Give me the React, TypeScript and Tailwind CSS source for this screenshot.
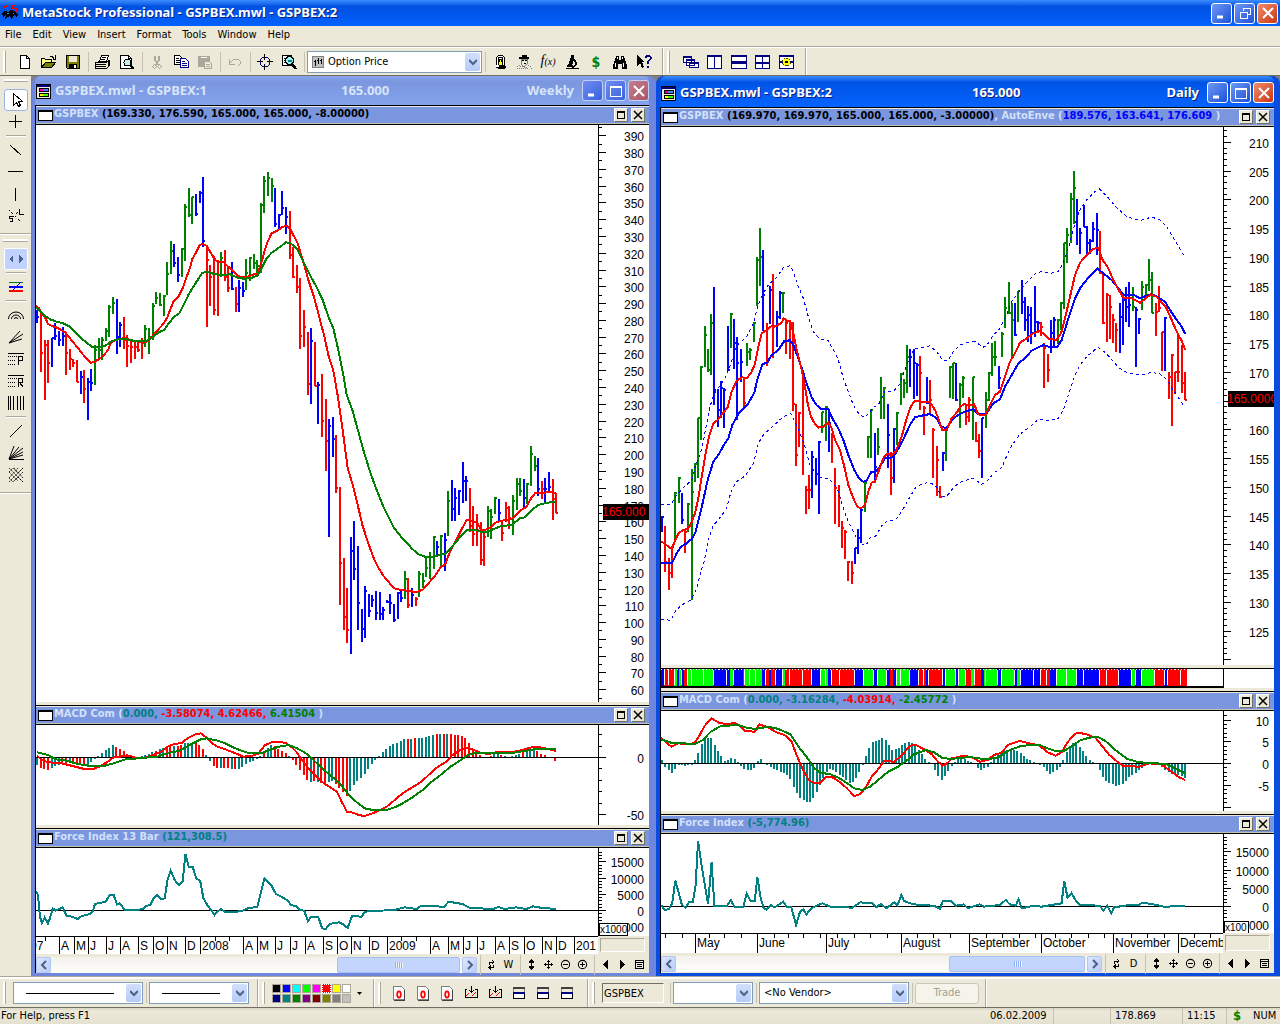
import React from 'react';

/* ---------- shared types and colours ---------- */

type Tone = 'r' | 'g' | 'b';
type Bar = [Tone, number, number, number, number];

const INK: Record<string, string> = {
  r: '#ff0000',
  g: '#008000',
  b: '#0000ff',
  t: '#008080',
  l: '#00ff00',
};

const UI = "font-['DejaVu_Sans_Condensed','Noto_Sans',sans-serif]";
const TITLE = "font-['Noto_Sans','Open_Sans',sans-serif]";
const ARIAL = 'Liberation Sans, Arial, sans-serif';

/* Series are kept in thirds of a pixel: bar = tone, x, high, low, close. */

const weeklyA: Bar[] = [
  ['b',21,450,488,470],['r',33,455,635,578],['r',45,541,719,555],['r',54,541,670,608],['b',66,535,620,535],['b',75,490,540,527],
  ['b',87,512,557,540],['b',99,502,557,527],['r',108,515,644,578],['r',120,568,629,598],['r',129,598,620,608],['r',141,600,665,665],
  ['b',153,633,701,650],['r',162,630,728,686],['b',174,655,779,665],['b',183,627,692,668],['g',195,556,676,570],['g',207,535,598,570],
  ['g',216,532,600,540],['g',228,505,542,513],['g',237,436,530,440],['g',249,412,461,430],['b',261,418,581,530],['b',270,487,560,495],
  ['r',282,472,566,540],['r',291,525,620,558],['r',303,540,608,560],['r',315,545,597,560],['r',324,543,575,570],['r',336,535,596,545],
  ['g',345,495,560,507],['g',357,505,581,530],['g',369,430,540,438],['g',378,397,433,415],['g',390,400,437,435],['g',402,406,467,408],
  ['g',411,307,405,342],['g',423,243,342,272],['b',432,253,322,310],['b',444,292,365,345],['g',456,265,352,268],['g',465,133,302,140],
  ['g',477,85,172,165],['g',487,110,193,112],['b',498,102,167,162],['b',510,94,130,98],['b',519,52,262,243],['r',531,258,502,300],
  ['r',540,316,437,352],['r',552,288,465,450],['r',564,300,467,305],['g',573,275,352,293],['r',585,270,362,350],['r',595,322,395,385],
  ['b',606,307,390,388],['r',618,380,455,432],['b',627,360,455,383],['b',639,365,410,393],['g',648,298,390,340],['g',660,290,362,293],
  ['g',672,282,328,310],['g',681,300,342,318],['g',693,130,340,135],['g',702,48,160,62],['g',714,37,107,55],['g',726,55,127,78],
  ['b',735,85,202,193],['b',747,163,208,165],['b',756,94,165,143],['b',768,140,223,170],['r',780,154,298,285],['r',789,260,355,352],
  ['r',801,315,398,380],['r',810,355,566,527],['r',822,450,560,500],['r',834,517,705,672],['b',843,505,731,543],['r',855,547,678,678],
  ['b',864,667,791,675],['r',876,642,830,782],
];

const weeklyB: Bar[] = [
  ['r',18,297,513,422],['b',27,357,711,377],['b',39,352,470,417],['r',48,406,578,563],['r',60,562,914,788],['r',72,774,990,950],
  ['r',81,864,1028,990],['b',93,711,1061,752],['b',102,663,839,806],['b',114,738,990,909],['b',126,927,1025,987],['b',135,858,1014,873],
  ['b',147,882,950,933],['b',156,885,920,900],['b',168,873,959,938],['b',180,876,959,942],['b',189,922,960,930],['b',201,900,910,907],
  ['b',210,882,943,908],['b',222,913,965,960],['b',234,877,956,880],['b',243,873,905,895],['g',255,813,896,837],['r',264,834,923,915],
  ['b',276,864,921,885],['r',288,890,917,897],['g',297,814,892,822],['g',309,819,865,843],['g',318,770,830,803],['g',330,756,837,770],
  ['g',342,708,806,712],['b',351,722,768,740],['g',363,705,801,707],['b',375,699,812,720],['g',384,573,708,603],['b',396,540,663,627],
  ['b',405,564,663,595],['b',417,570,645,572],['b',429,486,608,543],['b',438,528,603,543],['r',450,564,697,677],['r',459,618,738,702],
  ['r',471,641,738,690],['r',483,665,795,780],['r',492,690,797,710],['g',504,618,711,633],['g',513,626,718,652],['g',525,592,641,593],
  ['b',537,597,665,640],['r',546,665,722,700],['r',558,606,665,623],['r',567,618,686,655],['g',579,586,704,602],['g',591,534,630,552],
  ['g',600,534,587,573],['b',612,537,625,595],['g',621,550,612,553],['g',633,438,559,463],['g',645,467,512,497],['b',654,474,587,567],
  ['r',666,543,597,567],['b',675,534,608,567],['b',687,516,580,560],['r',699,537,660,597],['r',708,580,638,638],
];

const dailyA: Bar[] = [
  ['b',21,1037,1085,1040],['r',30,1068,1205,1175],['r',42,1163,1259,1208],['r',51,1128,1223,1130],['g',60,965,1110,968],['g',72,922,1000,925],
  ['b',81,968,1063,1050],['r',90,1078,1150,1085],['g',99,1000,1085,1003],['g',111,897,1291,965],['g',120,880,935,883],['g',129,743,923,745],
  ['g',138,587,810,590],['g',150,468,592,495],['g',159,538,605,600],['g',168,433,615,460],['b',177,352,706,660],['b',189,657,770,720],
  ['b',198,632,745,655],['b',207,655,775,660],['b',219,468,603,600],['g',228,430,535,433],['b',237,448,598,520],['b',246,502,749,580],
  ['b',258,538,637,575],['r',267,620,710,700],['g',276,520,587,545],['g',285,533,570,540],['g',297,457,517,460],['g',306,262,408,270],
  ['g',315,175,347,260],['b',324,241,484,375],['r',336,460,587,575],['b',345,348,463,360],['r',354,312,563,470],['b',366,423,530,440],
  ['b',375,363,448,370],['g',384,367,430,368],['r',393,448,551,460],['r',405,455,568,462],['r',414,455,724,703],['r',423,703,887,855],
  ['r',432,727,830,730],['r',444,600,914,640],['r',453,947,1033,960],['r',462,915,1018,960],['b',471,843,983,860],['b',483,865,945,912],
  ['b',492,812,1033,815],['g',501,725,790,725],['g',513,707,813,710],['b',522,718,845,760],['r',531,790,880,800],['r',540,895,1063,955],
  ['r',552,945,1070,983],['r',561,1052,1133,1075],['r',570,1080,1168,1085],['r',579,1172,1232,1175],['r',591,1172,1241,1208],['b',600,1133,1183,1135],
  ['b',609,1078,1153,1105],['b',618,1018,1120,1020],['g',630,935,1025,938],['g',639,797,865,800],['g',648,718,863,720],['b',660,790,935,890],
  ['g',669,775,855,830],['g',678,622,748,680],['g',687,652,748,655],['b',699,703,893,795],['r',708,845,974,925],['b',717,775,940,778],
  ['g',726,727,825,730],['g',738,610,706,613],['g',747,627,685,640],['g',756,525,668,560],['b',765,538,650,560],['b',777,537,688,580],
  ['b',786,580,677,585],['r',795,557,720,610],['r',807,708,795,715],['b',816,622,703,700],['r',825,630,730,690],['r',834,775,923,780],
  ['r',846,828,977,870],['r',855,948,983,980],['b',864,847,902,850],['g',873,770,872,775],['g',885,587,683,590],['g',894,578,687,580],
  ['b',903,580,694,690],['g',915,640,775,645],['g',924,618,683,625],['r',933,705,765,740],['r',942,682,757,690],['g',954,620,810,622],
];

const dailyB: Bar[] = [
  ['r',48,907,965,963],['r',57,943,1013,993],['b',66,893,1073,895],['g',78,817,925,840],['g',87,757,843,760],['g',96,670,767,710],
  ['g',105,662,737,710],['b',117,738,808,775],['g',126,635,710,642],['g',135,532,625,565],['g',147,487,583,580],['g',156,548,718,600],
  ['b',165,548,647,645],['g',174,512,605,513],['b',186,481,582,545],['b',195,530,633,600],['b',204,558,667,585],['b',213,560,673,640],
  ['b',225,498,650,605],['b',234,603,637,610],['r',243,607,648,620],['r',252,670,805,685],['r',264,703,785,750],['b',273,600,700,640],
  ['b',282,592,683,600],['g',294,598,673,600],['g',303,547,630,550],['g',312,368,567,370],['g',321,325,428,345],['g',333,220,370,237],
  ['g',342,153,312,203],['b',351,238,375,280],['b',360,325,402,340],['b',372,255,320,320],['b',381,318,408,370],['b',390,358,403,362],
  ['b',399,307,367,328],['b',411,280,406,330],['r',420,332,463,460],['r',429,460,613,610],['r',441,520,667,525],['r',450,525,658,560],
  ['r',459,582,668,600],['r',468,610,697,630],['b',480,548,700,590],['b',489,533,675,540],['b',498,500,607,560],['b',507,485,620,555],
  ['g',519,500,573,560],['b',528,560,740,570],['b',537,595,643,597],['g',546,482,570,500],['g',558,493,530,495],['g',567,418,512,480],
  ['g',576,457,580,580],['r',588,550,648,575],['r',597,497,577,565],['r',606,635,752,637],['b',615,590,753,593],['r',627,757,837,770],
  ['r',636,703,917,705],['r',645,755,822,757],['r',654,643,785,755],['r',666,675,818,790],['r',675,755,840,840],
];

/* ---------- drawing helpers ---------- */

function Line({ pts, color, dash, thin }: { pts: string; color: string; dash?: boolean; thin?: boolean }) {
  return (
    <polyline
      points={pts}
      fill="none"
      stroke={color}
      strokeWidth={thin ? 1 : 2}
      strokeDasharray={dash ? '3 3' : undefined}
      vectorEffect="non-scaling-stroke"
      shapeRendering="crispEdges"
    />
  );
}

function Bars({ data }: { data: Bar[] }) {
  return (
    <>
      {data.map(([c, x, hi, lo, close]) => (
        <path key={x} d={`M${x} ${hi}V${lo}M${x} ${close}h6`} stroke={INK[c]} strokeWidth={6} fill="none" shapeRendering="crispEdges" />
      ))}
    </>
  );
}

function parse(knots: string): number[][] {
  return knots.split(' ').map((p) => p.split(',').map(Number));
}

function Histogram({ knots, zero, step, runs }: { knots: string; zero: number; step: number; runs: string }) {
  const pts = parse(knots);
  const last = pts[pts.length - 1][0];
  const colours = runs.split(' ').map((r) => r.split(':'));
  const items: React.ReactNode[] = [];
  for (let x = pts[0][0]; x <= last; x += step) {
    let i = 0;
    while (i < pts.length - 2 && pts[i + 1][0] < x) i++;
    const [x0, y0] = pts[i];
    const [x1, y1] = pts[i + 1];
    const y = y0 + ((y1 - y0) * (x - x0)) / (x1 - x0);
    const run = colours.find((r) => x <= Number(r[1])) ?? colours[colours.length - 1];
    items.push(
      <path
        key={x}
        d={`M${x} ${zero}V${y}`}
        stroke={INK[run[0]]}
        strokeWidth={2}
        vectorEffect="non-scaling-stroke"
        shapeRendering="crispEdges"
      />,
    );
  }
  return <>{items}</>;
}

function Plot({ h, size, children }: { h: number; size: string; children: React.ReactNode }) {
  return (
    <svg className={`block min-w-0 flex-1 ${size}`} viewBox={`0 0 1686 ${h * 3}`} preserveAspectRatio="none">
      {children}
    </svg>
  );
}

type ScaleProps = {
  size: string;
  zeroY: number;
  unit: number;
  from: number;
  to: number;
  major: number;
  minor: number;
  labels: [number, string][];
  price?: [number, string];
  box?: [string, number, number];
};

function ValueScale({ size, zeroY, unit, from, to, major, minor, labels, price, box }: ScaleProps) {
  const ticks: React.ReactNode[] = [];
  for (let v = from; v <= to; v += minor) {
    const y = Math.round(zeroY - v * unit);
    ticks.push(<path key={v} d={`M0 ${y + 0.5}h${v % major === 0 ? 8 : 4}`} stroke="#000" />);
  }
  return (
    <svg className={`block w-[51px] shrink-0 ${size}`} fontFamily={ARIAL} fontSize="12" shapeRendering="crispEdges">
      <path d="M.5 0V600" stroke="#000" />
      {ticks}
      {labels.map(([v, s]) => (
        <text key={v} x="46" y={Math.round(zeroY - v * unit) + 6} textAnchor="end">
          {s}
        </text>
      ))}
      {price && (
        <>
          <rect x="5" y={price[0] - 8} width="46" height="16" />
          <text x="4" y={price[0] + 4} fill="#ff0000">
            {price[1]}
          </text>
        </>
      )}
      {box && (
        <>
          <rect x="1.5" y={box[1] + 0.5} width={box[2]} height="12" fill="#fff" stroke="#000" />
          <text x="2" y={box[1] + 10} fontSize="10">
            {box[0]}
          </text>
        </>
      )}
    </svg>
  );
}

/* ---------- icons ---------- */

function Ico({ children, size = 'size-4' }: { children: React.ReactNode; size?: string }) {
  return (
    <svg className={size} viewBox="0 0 16 16" fill="none" stroke="#000" shapeRendering="crispEdges" aria-hidden="true">
      {children}
    </svg>
  );
}

const icons: Record<string, React.ReactNode> = {
  New: <Ico><path d="M3.5 1.5h6l3 3v10h-9zM9.5 1.5v3h3" fill="#fff" /></Ico>,
  Open: <Ico><path d="M.5 13.500v-9h3l1 1h6v3" fill="#ffff80" /><path d="M.5 13.500l4-5h10l-4 5z" fill="#808000" /><path d="M9 2.500h2l2 2M14.500 1v4h-3" /></Ico>,
  Save: <Ico><path d="M1.5 1.5h13v13h-12l-1-1z" fill="#808000" /><path d="M4 2h8v6H4z" fill="#ece9d8" stroke="none" /><path d="M4 10h8v4H4z" fill="#000" stroke="none" /><path d="M9 11h2v3H9z" fill="#fff" stroke="none" /></Ico>,
  Print: <Ico><path d="M4.5 7.5l2-6h7l-2 6z" fill="#fff" /><path d="M7 3.5h4M6 5.5h4" /><path d="M.5 8.500h11l3-2v5l-3 3h-11z" fill="#ece9d8" /><path d="M1 10.500h10M1 12.500h10M3 8.500l2-2M13.500 6v6" /><path d="M7 11.500h2" stroke="#ffff00" /></Ico>,
  'Print Preview': <Ico><path d="M1.5 1.5h8l3 3v10h-11z" fill="#fff" /><path d="M9.500 1.5v3h3" /><circle cx="8.500" cy="8.500" r="3.500" fill="#c0f0f0" /><path d="M11 11l4 4" strokeWidth="2" /></Ico>,
  Cut: <Ico><path d="M6 2v4l3 5M10 2v4l-3 5" stroke="#aca899" strokeWidth="1.5" /><circle cx="5.5" cy="12.500" r="1.800" stroke="#aca899" /><circle cx="10.500" cy="12.500" r="1.800" stroke="#aca899" /></Ico>,
  Copy: <Ico><path d="M1.5 1.5h5l2 2v7h-7z" fill="#fff" /><path d="M3 4.500h3M3 6.500h4M3 8.500h4" /><path d="M7.500 4.500h5l3 3v6h-8z" fill="#fff" stroke="#000080" /><path d="M9 7.500h3M9 9.500h5M9 11.500h5" stroke="#000080" /></Ico>,
  Paste: <Ico><path d="M1.5 2.500h11v10h-11z" fill="#aca899" stroke="#aca899" /><path d="M4 3.500h6" stroke="#fff" /><path d="M7.500 7.500h5l2 2v5h-7z" fill="#ece9d8" stroke="#aca899" /><path d="M9 10.500h4M9 12.500h4" stroke="#aca899" /></Ico>,
  Undo: <Ico><path d="M2.500 5v5h5M3 9l4-4h4l2 2v3l-2 2" stroke="#aca899" /></Ico>,
  'Data window': <Ico><circle cx="8" cy="8" r="5" stroke="#000080" /><path d="M7.500 0v6M7.500 10v6M0 7.500h6M10 7.500h6" stroke="#000" /></Ico>,
  Zoom: <Ico><path d="M1.5 1.5h9v10h-9z" fill="#fff" /><path d="M3 4.500h5M3 6.500h5M3 8.500h4" /><circle cx="8.500" cy="6.500" r="4" fill="#a0f0f0" strokeWidth="1.5" /><path d="M6.500 6.500h4" stroke="#008080" strokeWidth="2" /><path d="M11 10l4 5" strokeWidth="2.500" /></Ico>,
  'The Explorer': <Ico><path d="M4.500 14V3.500l2-2h4l2 2V11" fill="#fff" /><path d="M6 3h4v3H6z" fill="#fff" stroke="#000" /><path d="M7 5h2v2h1v4H6V7h1z" fill="#ffff00" stroke="#000" /><path d="M3 12l4-1h5l3 2-3 2H6z" fill="#000" stroke="none" /><path d="M4 11h3v2H4z" fill="#fff" stroke="none" /></Ico>,
  'Expert Advisor': <Ico><path d="M3 4h10M6 2h5" strokeWidth="2" /><path d="M5 5h6v5l-2 2H7l-2-2z" fill="#ece9d8" stroke="#808080" /><path d="M6 6.500h2M9 6.500h2M8 9.500h2" /><path d="M1 15v-2l4-2M15 15v-2l-4-2M3 14h10M4 12l8 2" stroke="#808080" strokeDasharray="1 1" /></Ico>,
  'System Tester': <Ico><path d="M8 1l2 1-2 8H5zM2 14.500h13" fill="#000" /><path d="M9.500 5l2 3v3l-3 3M3 11.500h6" strokeWidth="2" /></Ico>,
  Find: <Ico><path d="M4 2h3v4h2V2h3l1 4 2 5v4h-5v-5H6v5H1v-4l2-5z" fill="#000" stroke="none" /><path d="M3.500 9v4M11.500 9v4M5.500 3v2M10.500 3v2" stroke="#fff" /></Ico>,
  'Context help': <Ico><path d="M1 1v11l3-3 2 5 2-1-2-5h3z" fill="#000" stroke="none" /><path d="M9.500 4V3L11 1.500h2L14.500 3v2L12 7.500V10M12 12v2" stroke="#000080" strokeWidth="2" /></Ico>,
  Cascade: <Ico><path d="M.5 2.500h8v6h-8zM3.500 5.500h8v6h-8zM6.500 8.500h9v5h-9z" fill="#fff" stroke="#000080" /><path d="M0 3h9M3 6h9M6 9h10" stroke="#000080" strokeWidth="2" /></Ico>,
  'Tile vertically': <Ico><path d="M.5 1.5h14v13H.5zM7.500 1v14" fill="#fff" stroke="#000080" /><path d="M0 2h15" stroke="#000080" strokeWidth="2" /></Ico>,
  'Tile horizontally': <Ico><path d="M.5 1.5h15v6h-15zM.5 8.500h15v6h-15z" fill="#fff" stroke="#000080" /><path d="M0 2h16M0 9h16" stroke="#000080" strokeWidth="2" /></Ico>,
  'Tile in grid': <Ico><path d="M.5 1.5h14v13H.5zM7.500 1v14M0 8.500h15" fill="#fff" stroke="#000080" /><path d="M0 2h15M0 9h15" stroke="#000080" strokeWidth="2" /></Ico>,
  'Layout options': <Ico><path d="M.5 1.5h14v13H.5z" fill="#fff" stroke="#000080" /><path d="M0 2h15M0 8h15" stroke="#000080" strokeWidth="2" /><circle cx="7.500" cy="8" r="4" fill="#ffff00" stroke="#404000" strokeDasharray="2 1" strokeWidth="1" /><circle cx="7.500" cy="8" r="1" fill="#fff" /></Ico>,
  Select: <Ico><path d="M5.5 1.5v12l3-3 2 4 2-1-2-4h4z" fill="#fff" /></Ico>,
  Crosshair: <Ico><path d="M7.500 1v13M1 7.500h13" /></Ico>,
  Trendline: <Ico><path d="M2 3l11 10" /></Ico>,
  'Horizontal line': <Ico><path d="M0 7.500h15" /></Ico>,
  'Vertical line': <Ico><path d="M7.500 2v13" /></Ico>,
  'Stop and limit': <Ico><path d="M1.500 2.500l12 12M11.500 2.500l-9 9" strokeDasharray="1 1" /><path d="M11.500 1v5h4M4.500 8.500h-3v2h3v3h-3" /></Ico>,
  'Scroll tool': <Ico><path d="M5 4v8L1 8zM11 4v8l4-4z" fill="#4d6185" stroke="none" /></Ico>,
  'Line study': <Ico><path d="M1 3.500h14" stroke="#008000" /><path d="M1 8h14" stroke="#0000ff" strokeWidth="2" /><path d="M3 13L13 3" stroke="#0000ff" /><path d="M1 12h14" stroke="#ff0000" strokeWidth="2" /></Ico>,
  'Fibonacci arcs': <Ico><path d="M.5 12a7.500 7 0 0 1 15 0M3.500 12a4.500 4 0 0 1 9 0M6.500 12a1.500 1.500 0 0 1 3 0" shapeRendering="auto" /></Ico>,
  'Fibonacci fan': <Ico><path d="M1 14L12 2M1 14l14-9M1 14l13-4" shapeRendering="auto" /></Ico>,
  Projection: <Ico><path d="M0 2.500h16" /><path d="M0 5.500h9M0 9.500h8M0 13.500h8" strokeDasharray="1 1" /><path d="M10.500 14V5.500h4v4h-4" /></Ico>,
  Retracement: <Ico><path d="M0 2.500h16" /><path d="M0 5.500h9M0 9.500h8M0 13.500h8" strokeDasharray="1 1" /><path d="M10.500 14V5.500h4v4h-4M12 10l3 4" /></Ico>,
  'Time zones': <Ico><path d="M.5 1v14M2.500 1v14M5.500 1v14M9.500 1v14M12.500 1v14M15.500 1v14" /></Ico>,
  'Gann line': <Ico><path d="M2 14L14 2" shapeRendering="auto" /></Ico>,
  'Gann fan': <Ico><path d="M1 14.500h15M1 14L6 1M1 14L11 2M1 14L15 3M1 14l14-7M1 14l14-4" shapeRendering="auto" /></Ico>,
  'Gann grid': <Ico><path d="M1 5l4-4 5 5 5-5M1 1l14 14M15 1L1 15M1 11l4 4 5-5 5 5M1 5l9 9M15 5l-9 9M1 11L10 1M15 11L6 1" strokeDasharray="2 1" shapeRendering="auto" strokeWidth=".8" /></Ico>,
};

const miniIcons: Record<string, React.ReactNode> = {
  Refresh: <path d="M4.500 8V4.500h6M8.500 1.500l3 3-3 3M11.500 8v4.500h-6M7.500 9.500l-3 3 3 3" strokeWidth="1.500" />,
  'Expand vertically': <><path d="M8 0l5 6H3zM8 16l5-6H3z" fill="#000" stroke="none" /><path d="M8 4v8" strokeWidth="2.500" /></>,
  Move: <path d="M8 1v14M1 8h14M6 3h4M6 13h4M3 6v4M13 6v4" strokeWidth="1.500" />,
  'Zoom out': <><circle cx="8" cy="8" r="6" strokeWidth="1.500" shapeRendering="auto" /><path d="M5 8h6" strokeWidth="1.500" /></>,
  'Zoom in': <><circle cx="8" cy="8" r="6" strokeWidth="1.500" shapeRendering="auto" /><path d="M5 8h6M8 5v6" strokeWidth="2" /></>,
  'Previous security': <path d="M12 1v14L5 8z" fill="#000" stroke="none" />,
  'Next security': <path d="M4 1v14l7-7z" fill="#000" stroke="none" />,
  'Choose security': <path d="M2.500 2.500h12v12h-12zM2.500 4.500h12M5 8h7M5 11h7" strokeWidth="1.500" />,
};

function AppGlyph() {
  return (
    <svg className="size-4 shrink-0" viewBox="0 0 16 16" shapeRendering="crispEdges" aria-hidden="true">
      <path d="M1 5V0l2 3 2-3v5M14 0h-4v3h4v3h-4" stroke="#ff0000" fill="none" />
      <path d="M0 8l3-2 3 1 2-2 5 1 3 4-1 3-2-3-2 1-1 4-2-4-2 1-3 2 1-4-3 2z" fill="#000" />
      <path d="M5 8.500h2M11 8.500h1" stroke="#00c0c0" />
    </svg>
  );
}

function ChartGlyph() {
  return (
    <svg className="h-4 w-[15px] shrink-0" viewBox="0 0 15 16" shapeRendering="crispEdges" aria-hidden="true">
      <path d="M.5 1.5h14v14H.5z" fill="#ece9d8" stroke="#000" />
      <path d="M1 2.500h13" stroke="#000080" strokeWidth="2" />
      <path d="M3 5h10v4H3zM3 10h10v4H3z" fill="#000" />
      <path d="M4 7h3" stroke="#ff0080" strokeWidth="2" />
      <path d="M7 7h5" stroke="#4080ff" strokeWidth="2" />
      <path d="M4 12h3" stroke="#ffff00" strokeWidth="2" />
      <path d="M7 12h5" stroke="#40ff00" strokeWidth="2" />
    </svg>
  );
}

/* ---------- chrome pieces ---------- */

function FrameButtons({ active, restore }: { active: boolean; restore?: boolean }) {
  const blue = active ? 'bg-linear-to-br from-[#6f97f5] to-[#1d4fd8] border-white' : 'bg-linear-to-br from-[#6f8df0] to-[#3a62dd] border-[#c4d0f4]';
  const red = active ? 'bg-linear-to-br from-[#f08a68] to-[#c9330c] border-white' : 'bg-linear-to-br from-[#c27f90] to-[#a95667] border-[#c4d0f4]';
  const box = 'grid size-[21px] place-items-center rounded-[3px] border';
  return (
    <div className="flex shrink-0 gap-0.5">
      <button aria-label="Minimize" className={`${box} ${blue}`}>
        <svg className="size-3.5" viewBox="0 0 14 14"><path d="M2 11h6" stroke="#fff" strokeWidth="3" /></svg>
      </button>
      <button aria-label={restore ? 'Restore' : 'Maximize'} className={`${box} ${blue}`}>
        <svg className="size-3.5" viewBox="0 0 14 14" fill="none" stroke="#fff" shapeRendering="crispEdges">
          {restore ? <path d="M5.5 5V2.500h7v6H10M5 2h8M2.500 6.500h7v6h-7zM2 6h8" /> : <path d="M1.5 2.500h11v10h-11zM1 2h12M1 3.500h12" />}
        </svg>
      </button>
      <button aria-label="Close" className={`${box} ${red}`}>
        <svg className="size-3.5" viewBox="0 0 14 14"><path d="M2 2l10 10M12 2L2 12" stroke="#fff" strokeWidth="2" /></svg>
      </button>
    </div>
  );
}

function VSep() {
  return (
    <span className="flex h-5 w-1.5 shrink-0 justify-center">
      <span className="w-px bg-[#c5c2b2]" />
    </span>
  );
}

function Grip() {
  return <span className="mx-[3px] h-[22px] w-[3px] shrink-0 border-r border-[#aca899] bg-white" />;
}

function ToolButton({ name, children }: { name: string; children?: React.ReactNode }) {
  return (
    <button aria-label={name} title={name} className="grid h-[22px] w-6 shrink-0 place-items-center">
      {children ?? icons[name]}
    </button>
  );
}

function Picker({ label, value, width, line, glyph }: { label: string; value: string; width: string; line?: boolean; glyph?: boolean }) {
  return (
    <label className={`relative block h-[22px] shrink-0 border border-[#7f9db9] bg-white ${width}`}>
      <span className="sr-only">{label}</span>
      <select className={`block size-full appearance-none bg-white pr-5 leading-5 outline-none ${glyph ? 'pl-5' : 'pl-1'}`} defaultValue={value}>
        <option>{value}</option>
      </select>
      {glyph && (
        <svg className="pointer-events-none absolute top-1 left-1 size-3" viewBox="0 0 12 12" fill="none" stroke="#000" shapeRendering="crispEdges">
          <path d="M.5.5h11v11H.5z" fill="#c0c0c0" stroke="#808080" />
          <path d="M3.500 4v6M2 5.500h2M6.500 2v6M5 4.500h2M9.500 3v5M8 4.500h2" />
        </svg>
      )}
      {line && <span className="pointer-events-none absolute top-1/2 right-7 left-3 h-px bg-black" />}
      <span className="pointer-events-none absolute top-px right-px bottom-px grid w-[15px] place-items-center rounded-xs bg-linear-to-b from-[#d2dffc] to-[#b4cbf8]">
        <svg className="size-2" viewBox="0 0 8 8"><path d="M0 2l4 4 4-4" fill="none" stroke="#4d6185" strokeWidth="2" /></svg>
      </span>
    </label>
  );
}

function PanelHeader({ children }: { children: React.ReactNode }) {
  const box = 'grid size-[14px] place-items-center border border-t-white border-l-white border-r-[#716f64] border-b-[#716f64] bg-[#ece9d8]';
  return (
    <div className="flex h-5 items-center border-y border-black bg-[#7a96df] pr-1 text-[11px] leading-4 font-bold text-[#d2e0fa] shadow-[inset_0_1px_0_#ece9d8,inset_0_-1px_0_#c5c2b2]">
      <span className="mr-px ml-0.5 h-[11px] w-[15px] shrink-0 border border-t-2 border-black bg-white" />
      <span className="min-w-0 flex-1 overflow-hidden pb-0.5 whitespace-nowrap">{children}</span>
      <span className="flex shrink-0 gap-[3px]">
        <button aria-label="Maximize pane" className={box}>
          <svg className="size-2.5" viewBox="0 0 10 10" shapeRendering="crispEdges"><path d="M1.5 1.5h7v7h-7zM1 2h8" fill="none" stroke="#000" /></svg>
        </button>
        <button aria-label="Close pane" className={box}>
          <svg className="size-2.5" viewBox="0 0 10 10"><path d="M1 1l8 8M9 1L1 9" stroke="#000" strokeWidth="1.5" /></svg>
        </button>
      </span>
    </div>
  );
}

function Row({ children }: { children: React.ReactNode }) {
  return <div className="mb-[3px] flex bg-white">{children}</div>;
}

function MiniButton({ name }: { name: string }) {
  return (
    <button aria-label={name} className="grid h-4 w-[17px] shrink-0 place-items-center">
      <Ico size="size-[11px]">{miniIcons[name]}</Ico>
    </button>
  );
}

function ScrollRow({ period, thumb }: { period: string; thumb: string }) {
  const arrow = 'grid h-4 w-[15px] shrink-0 place-items-center rounded-xs border border-[#b4c8f6] bg-linear-to-br from-[#dbe6fe] to-[#b9cdfa]';
  return (
    <div className="mt-0.5 flex h-[17px] items-center bg-[#ece9d8] pr-px">
      <button aria-label="Scroll left" className={arrow}>
        <svg className="size-2.5" viewBox="0 0 10 10"><path d="M7 1L3 5l4 4" fill="none" stroke="#4d6185" strokeWidth="2" /></svg>
      </button>
      <div className="flex h-4 min-w-0 flex-1 bg-linear-to-b from-[#f3f1ec] to-[#fefefb]">
        <div className={`mr-0.5 ml-auto grid place-items-center rounded-xs border border-[#a9c0f5] bg-[#c3d4fd] ${thumb}`}>
          <span className="flex gap-px">
            {[0, 1, 2, 3].map((i) => (
              <span key={i} className="h-1.5 w-px bg-[#8cb0f8] shadow-[1px_0_0_#eef4fe]" />
            ))}
          </span>
        </div>
      </div>
      <button aria-label="Scroll right" className={arrow}>
        <svg className="size-2.5" viewBox="0 0 10 10"><path d="M3 1l4 4-4 4" fill="none" stroke="#4d6185" strokeWidth="2" /></svg>
      </button>
      <VSep />
      <MiniButton name="Refresh" />
      <button aria-label="Periodicity" className="h-4 w-[17px] shrink-0 text-center text-[11px] leading-4">{period}</button>
      <VSep />
      <MiniButton name="Expand vertically" />
      <MiniButton name="Move" />
      <MiniButton name="Zoom out" />
      <MiniButton name="Zoom in" />
      <VSep />
      <MiniButton name="Previous security" />
      <MiniButton name="Next security" />
      <MiniButton name="Choose security" />
    </div>
  );
}

function DateScale({ marks, minor, size }: { marks: [number, string][]; minor: number[]; size: string }) {
  return (
    <div className={`flex bg-[#ece9d8] ${size}`}>
      <svg className="block h-full min-w-0 flex-1 bg-white" fontFamily={ARIAL} fontSize="12" shapeRendering="crispEdges">
        <path d="M0 .5H2000" stroke="#000" />
        {minor.map((x) => <path key={x} d={`M${x + 0.5} 0v5`} stroke="#000" />)}
        {marks.map(([x, s]) => (
          <g key={x}>
            {x > 0 && <path d={`M${x + 0.5} 0v30`} stroke="#000" />}
            <text x={x + 2} y="14">{s}</text>
          </g>
        ))}
      </svg>
      <div className="w-[51px] shrink-0 p-0.5">
        <div className="mr-0.5 h-full border border-t-[#aca899] border-l-[#aca899] border-r-white border-b-white" />
      </div>
    </div>
  );
}

function ChartWindow({ title, last, period, active, children }: { title: string; last: string; period: string; active: boolean; children: React.ReactNode }) {
  const frame = active
    ? 'border-[#0a4be0] border-l-4 border-r-[6px] bg-[#0a4be0]'
    : 'border-[#6f86dd] border-l-[3px] border-r-[7px] bg-[#7a96df]';
  const bar = active
    ? 'h-[31px] pt-0.5 bg-linear-to-b from-[#3a8bfd] via-[#0054e5] via-20% to-[#0563ff] text-white text-shadow-[1px_1px_0_#0a1e80]'
    : 'h-[29px] bg-linear-to-b from-[#8aa5ea] via-[#7a96df] via-20% to-[#84a4ec] text-[#d8e4f8]';
  return (
    <section className={`flex min-w-0 flex-1 flex-col rounded-t-lg border-b-[3px] ${frame}`}>
      <header className={`flex shrink-0 items-center gap-1 rounded-t-md pl-px text-[13px] font-bold ${bar} ${TITLE}`}>
        <ChartGlyph />
        <h2 className={`min-w-0 overflow-hidden whitespace-nowrap ${active ? 'w-[47%]' : 'w-[46%]'}`}>{title}</h2>
        <span>{last}</span>
        <span className="mr-1 ml-auto">{period}</span>
        <FrameButtons active={active} />
      </header>
      <div className="flex flex-1 flex-col border-l border-black bg-[#ece9d8]">{children}</div>
    </section>
  );
}

/* ---------- chart windows ---------- */

const weeklyMonths: [number, string][] = [
  [-8, '07'], [23, 'A'], [38, 'M'], [52, 'J'], [70, 'J'], [84, 'A'], [102, 'S'], [117, 'O'], [131, 'N'], [149, 'D'], [164, '2008'],
  [207, 'A'], [221, 'M'], [239, 'J'], [254, 'J'], [269, 'A'], [287, 'S'], [301, 'O'], [315, 'N'], [333, 'D'], [351, '2009'], [394, 'A'],
  [412, 'M'], [427, 'J'], [441, 'J'], [459, 'A'], [473, 'S'], [488, 'O'], [506, 'N'], [520, 'D'], [538, '201'],
];

const dailyMonths: [number, string][] = [
  [34, 'May'], [96, 'June'], [165, 'July'], [240, 'August'], [308, 'September'], [380, 'October'], [452, 'November'], [517, 'Decemb'],
];

const weeklyScale: [number, string][] = Array.from({ length: 34 }, (_, i): [number, string] => [390 - i * 10, String(390 - i * 10)]);
const dailyScale: [number, string][] = Array.from({ length: 18 }, (_, i): [number, string] => [210 - i * 5, String(210 - i * 5)]).filter(
  ([v]) => v !== 165,
);

function WeeklyWindow() {
  return (
    <ChartWindow title="GSPBEX.mwl - GSPBEX:1" last="165.000" period="Weekly" active={false}>
      <PanelHeader>
        GSPBEX <span className="text-black">(169.330, 176.590, 165.000, 165.000, -8.00000)</span>
      </PanelHeader>
      <Row>
        <Plot h={577} size="h-[577px]">
          <g transform="translate(-18 105)">
            <Bars data={weeklyA} />
            <Line color={INK.r} pts="18,437 27,445 36,460 45,472 54,492 66,498 78,502 90,508 105,517 120,535 150,572 168,595 183,608 195,605 207,597 222,585 234,570 243,548 258,540 270,536 285,535 300,540 340,548 355,543 370,525 385,508 400,492 412,472 430,425 445,410 458,385 470,350 478,330 487,297 498,278 508,257 517,251 531,258 543,280 556,300 566,306 580,305 590,316 605,328 622,347 640,352 655,350 672,343 683,340 693,312 703,275 713,245 725,220 745,210 758,200 770,198 780,205 790,225 803,250 812,280 822,312 835,360 850,405 862,448 870,480" />
            <Line color={INK.g} pts="18,443 30,452 45,467 60,478 80,485 100,490 120,500 140,520 160,540 185,560 200,562 225,558 245,543 265,538 285,537 310,542 345,543 358,540 372,528 388,516 402,510 415,492 432,470 448,460 460,437 475,405 490,380 505,357 517,338 535,336 555,343 580,345 600,343 620,352 640,356 660,355 683,347 695,325 710,295 725,278 740,268 755,257 768,247 782,250 800,265 820,305 840,345 860,382 878,420" />
          </g>
          <g transform="translate(852 525)">
            <Bars data={weeklyB} />
            <Line color={INK.r} pts="0,60 12,105 25,165 40,212 52,280 63,355 72,420 83,505 97,550 112,610 128,678 145,730 160,772 175,803 190,827 205,845 222,865 245,870 265,873 290,876 310,868 325,850 345,828 362,802 376,792 390,755 410,718 428,682 440,660 455,663 470,667 485,690 495,690 510,683 527,668 545,662 560,660 578,655 600,632 620,620 633,595 647,578 670,578 695,575 708,580" />
            <Line color={INK.g} pts="8,0 25,50 40,85 55,150 70,225 80,285 97,330 115,395 130,450 150,515 170,570 190,620 205,650 220,680 245,713 258,725 275,745 295,763 315,770 340,771 358,765 376,762 395,742 415,718 430,700 440,690 470,690 485,697 500,697 520,687 545,678 575,675 600,655 615,652 635,630 655,615 675,610 695,606 708,608" />
          </g>
        </Plot>
        <ValueScale size="h-[577px]" zeroY={665} unit={1.679} from={55} to={395} major={10} minor={5} labels={weeklyScale} price={[387, '165.000']} />
      </Row>
      <PanelHeader>
        MACD Com (<span className="text-[#008080]">0.000,</span> <span className="text-[#ff0000]">-3.58074, 4.62466,</span>{' '}
        <span className="text-[#008000]">6.41504</span> )
      </PanelHeader>
      <Row>
        <Plot h={100} size="h-[100px]">
          <g transform="translate(-18 -75) scale(1.1957 1)">
            <Histogram
              zero={172}
              step={9.03}
              runs="t:22 r:50 t:80 r:92 t:102 r:140 t:213 r:264 t:312 r:322 t:340 r:360 t:368 r:386 t:413 r:440 t:459 r:476 t:486 r:501 t:510 r:520 t:585 r:595 t:612 r:645 t:652 r:702 t:711 r:720 t:729 r:745 t:765 r:800 t:942 r:952 t:961 r:970 t:1020 r:1027 t:1036 r:1045 t:1055 r:1145 t:1155 r:1163 t:1180 r:1190 t:1230 r:1240 t:1268 r:1330"
              knots="18,194 27,204 45,210 60,200 75,195 95,190 110,190 125,193 143,195 155,185 170,170 185,155 200,142 208,135 218,141 230,150 245,163 262,170 275,172 285,165 300,160 320,150 345,140 370,137 395,128 410,128 428,135 440,160 455,190 465,205 490,204 515,208 530,205 545,190 565,180 585,160 600,140 608,134 620,145 640,158 655,175 668,195 680,215 700,247 715,243 730,250 742,253 755,240 770,255 788,278 797,290 808,262 825,240 835,230 850,205 862,185 872,172 885,155 910,133 940,118 990,113 1015,103 1040,103 1060,103 1090,110 1100,125 1110,145 1125,160 1138,175 1150,170 1170,160 1185,165 1200,170 1220,165 1235,158 1250,150 1265,145 1280,160 1300,170 1313,177 1322,185"
            />
            <Line color="#000" thin pts="0,173 1440,173" />
            <Line color={INK.r} pts="18,167 27,178 45,187 60,188 80,190 100,196 120,202 140,208 158,207 175,200 195,185 210,172 225,170 245,166 265,173 290,173 305,167 330,155 345,140 365,131 380,130 395,115 415,103 428,100 440,110 455,128 470,140 490,148 505,155 520,162 535,170 555,168 572,162 590,135 610,125 640,128 655,140 668,155 680,175 695,200 710,220 725,238 740,252 755,263 770,275 782,305 795,335 810,338 825,345 838,348 855,342 875,332 895,320 915,300 930,285 945,272 965,258 985,242 1000,225 1020,203 1045,185 1060,165 1080,150 1095,143 1110,148 1130,158 1150,162 1170,157 1190,155 1215,155 1235,150 1265,140 1285,143 1320,153" />
            <Line color={INK.g} pts="18,157 45,165 65,178 90,182 120,192 150,198 185,198 215,188 240,178 280,174 320,170 345,160 375,152 400,135 430,117 445,115 470,122 490,130 515,145 545,158 580,160 600,150 625,140 650,135 670,145 690,158 705,173 720,190 740,212 760,232 780,255 800,285 820,307 840,325 860,330 895,330 915,322 935,310 960,292 985,270 1005,248 1030,225 1055,200 1075,185 1100,165 1115,160 1170,160 1215,158 1240,153 1270,147 1320,147" />
          </g>
        </Plot>
        <ValueScale size="h-[100px]" zeroY={32} unit={1.14} from={-50} to={20} major={50} minor={10} labels={[[0, '0'], [-50, '-50']]} />
      </Row>
      <PanelHeader>
        Force Index 13 Bar <span className="text-[#008080]">(121,308.5)</span>
      </PanelHeader>
      <div className="flex bg-white">
        <Plot h={88} size="h-[88px]">
          <g transform="translate(-18 -444) scale(1.1957 1)">
            <Line color="#000" thin pts="0,632 1440,632" />
            <Line color={INK.t} pts="15,573 20,585 25,650 30,670 37,652 45,670 50,655 57,625 65,632 82,622 92,648 105,650 120,657 130,648 150,642 158,632 163,612 190,605 200,585 210,585 218,613 225,610 238,630 270,630 283,627 290,618 302,615 310,595 318,585 328,597 338,595 345,540 353,512 363,540 373,555 383,545 390,463 398,500 408,500 417,535 427,542 435,595 445,615 453,628 463,645 470,635 480,627 490,637 530,634 550,623 570,622 588,535 605,555 617,582 630,590 645,600 655,615 670,620 678,630 688,632 697,663 705,652 723,650 733,685 742,687 752,672 775,667 785,672 797,684 808,648 832,650 840,635 860,633 915,630 940,622 970,627 980,618 1040,620 1050,605 1085,612 1105,625 1165,626 1175,621 1190,627 1220,622 1245,627 1262,619 1290,625 1320,626" />
          </g>
        </Plot>
        <ValueScale size="h-[88px]" zeroY={62} unit={0.00325} from={-7000} to={18000} major={5000} minor={1000} labels={[[15000, '15000'], [10000, '10000'], [5000, '5000'], [0, '0'], [-5000, '-5000']]} box={['x1000', 75, 28]} />
      </div>
      <DateScale size="h-[18px]" marks={weeklyMonths} minor={[9, 179, 193, 365, 380]} />
      <ScrollRow period="W" thumb="w-[30%]" />
    </ChartWindow>
  );
}

/* Tone and right edge of each run in the trend ribbon. */
const ribbonRuns =
  'b:22 r:47 l:56 b:59 l:65 b:72 r:79 l:145 b:187 l:195 b:221 r:227 l:268 b:277 r:285 b:292 r:301 b:318 l:325 r:391 b:415 l:434 b:442 r:498 b:522 l:548 b:556 l:580 b:589 r:597 b:605 l:637 b:661 r:680 b:686 r:719 b:727 l:752 b:761 l:777 r:793 l:801 r:818 b:826 l:858 b:867 l:900 b:907 l:915 b:965 r:990 b:1007 l:1056 b:1113 r:1162 b:1194 l:1203 b:1219 l:1252 r:1277 b:1285 r:1335';

const ribbonGaps = [
  22, 32, 47, 65, 79, 90, 121, 146, 179, 195, 223, 237, 250, 276, 301, 318, 335, 368, 391, 415, 426, 442, 461, 498, 523, 548, 556, 580, 605,
  614, 637, 661, 672, 686, 719, 727, 752, 761, 777, 800, 827, 858, 867, 900, 915, 948, 965, 981, 1007, 1031, 1056, 1073, 1113, 1131, 1162,
  1194, 1203, 1219, 1252, 1277, 1285, 1318,
];

function Ribbon() {
  const runs = ribbonRuns.split(' ').map((s) => s.split(':'));
  return (
    <svg className="block h-[19px] min-w-0 flex-1" viewBox="15 0 1410 57" preserveAspectRatio="none" shapeRendering="crispEdges">
      {runs.map(([c, end], i) => {
        const x = i === 0 ? 15 : Number(runs[i - 1][1]);
        return <rect key={end} x={x} y="0" width={Number(end) - x} height="54" fill={INK[c]} />;
      })}
      {ribbonGaps.map((x) => <rect key={x} x={x} y="2" width="2.5" height="47" fill="#fff" />)}
      <path d="M15 1.5H1335" stroke="#fff" strokeWidth="3" strokeDasharray="3 5" />
      <rect x="15" y="51" width="1410" height="6" />
    </svg>
  );
}

function DailyWindow() {
  return (
    <ChartWindow title="GSPBEX.mwl - GSPBEX:2" last="165.000" period="Daily" active>
      <PanelHeader>
        GSPBEX <span className="text-black">(169.970, 169.970, 165.000, 165.000, -3.00000)</span>, AutoEnve (
        <span className="text-[#0000ff]">189.576, 163.641, 176.609</span> )
      </PanelHeader>
      <Row>
        <Plot h={538} size="h-[538px]">
          <g transform="translate(-18 129)">
            <Bars data={dailyA} />
            <Line dash thin color={INK.b} pts="18,1003 48,1003 58,985 80,958 100,940 112,925 122,885 135,855 145,815 155,760 165,710 178,670 200,640 215,615 228,580 240,540 255,515 272,505 285,480 297,455 305,420 315,390 325,370 340,345 365,322 385,293 405,287 415,305 430,350 445,385 460,440 475,485 495,508 520,512 535,540 550,570 565,625 580,665 595,705 612,732 628,742 642,730 655,712 670,705 690,663 712,665 730,650 750,600 765,560 780,535 800,533 825,527 845,545 865,573 880,570 895,545 915,525 935,518 955,515" />
            <Line dash thin color={INK.b} pts="18,1348 48,1351 60,1325 80,1305 110,1288 125,1255 135,1215 147,1175 160,1110 175,1065 190,1050 215,1015 228,965 245,935 270,918 295,880 310,820 325,795 350,772 385,740 407,730 420,755 435,790 450,830 465,885 490,922 520,925 535,940 550,965 565,1015 580,1055 600,1095 615,1120 632,1127 648,1100 662,1098 685,1060 700,1053 720,1052 740,1025 765,980 785,948 820,937 840,945 862,980 878,975 900,948 915,938" />
            <Line color={INK.b} pts="18,1180 30,1178 52,1178 65,1150 78,1130 95,1120 112,1105 122,1085 132,1045 145,990 158,930 175,875 190,855 205,828 220,805 232,765 248,735 265,715 280,700 298,668 308,625 322,583 337,577 350,555 370,540 388,513 405,511 415,525 428,560 442,600 455,640 470,682 485,706 498,716 520,718 532,745 550,775 565,810 580,855 598,900 612,925 625,935 635,932 648,907 662,905 678,885 690,865 712,862 725,845 745,808 765,765 780,742 800,737 825,732 845,745 860,772 875,773 895,745 915,732" />
            <Line color={INK.r} pts="18,1117 27,1118 38,1128 50,1137 60,1112 72,1088 85,1080 98,1077 108,1062 120,1030 130,985 140,920 152,850 162,800 175,760 190,748 205,728 218,712 230,665 245,632 262,622 275,625 290,605 300,582 310,530 320,490 335,480 345,470 365,467 380,458 386,445 395,452 406,454 415,490 425,540 438,590 448,640 458,700 468,740 480,762 490,773 505,770 520,758 530,775 540,810 555,840 568,890 580,945 595,985 607,1010 618,1015 630,1005 640,965 650,938 660,935 672,900 685,865 697,850 710,857 722,845 740,800 755,745 768,708 780,692 800,695 825,697 840,720 850,745 862,780 875,780 890,745 905,728 915,712" />
          </g>
          <g transform="translate(897 -21)">
            <Bars data={dailyB} />
            <Line dash thin color={INK.b} pts="40,665 45,663 68,682 80,677 100,645 120,625 140,585 155,545 180,512 200,487 225,462 245,454 270,460 295,455 307,435 325,385 345,310 360,270 380,240 405,215 418,207 440,228 470,263 500,290 540,302 575,291 600,300 618,317 635,345 655,378 672,408" />
            <Line dash thin color={INK.b} pts="0,1087 20,1080 40,1075 65,1093 85,1080 100,1060 125,1043 150,985 180,942 210,920 235,898 270,902 295,895 310,870 325,825 345,765 360,735 380,710 413,682 430,693 450,712 475,742 500,757 545,765 575,757 600,762 620,778 640,810 660,840 675,862" />
            <Line color={INK.b} pts="0,882 12,876 40,867 55,883 78,883 100,850 120,838 135,800 155,765 175,730 195,715 215,692 250,675 265,680 292,680 305,660 315,628 330,580 345,535 360,505 385,473 412,445 430,460 455,480 475,505 490,524 520,524 540,535 573,522 595,532 615,545 630,570 650,600 665,620 676,642" />
            <Line color={INK.r} pts="0,860 12,853 35,855 42,852 55,883 65,885 78,883 90,855 105,825 120,815 135,770 150,725 165,700 180,668 200,655 220,640 240,633 250,640 265,656 290,660 303,640 315,595 330,530 345,465 360,428 385,400 400,387 415,383 428,420 445,445 460,480 475,508 490,533 515,535 540,548 555,537 572,523 590,530 605,548 618,562 635,600 650,635 665,662 676,690" />
          </g>
        </Plot>
        <ValueScale size="h-[538px]" zeroY={1222} unit={5.748} from={120} to={212} major={5} minor={1} labels={dailyScale} price={[272, '165.0000']} />
      </Row>
      <div className="mb-[3px] flex border-t border-black bg-white">
        <Ribbon />
        <span className="w-[51px] shrink-0 border-l border-black" />
      </div>
      <PanelHeader>
        MACD Com (<span className="text-[#008080]">0.000, -3.16284,</span> <span className="text-[#ff0000]">-4.03914,</span>{' '}
        <span className="text-[#008000]">-2.45772</span> )
      </PanelHeader>
      <Row>
        <Plot h={100} size="h-[100px]">
          <g transform="translate(-18 -168) scale(1.1957 1)">
            <Histogram
              zero={325}
              step={8.25}
              runs="t:1400"
              knots="18,315 26,335 43,353 52,340 60,330 75,332 95,328 108,298 122,250 133,250 142,248 150,270 160,290 175,318 190,310 205,315 220,340 235,347 248,340 262,305 275,328 290,335 315,352 335,360 350,400 362,428 378,440 387,443 400,425 412,395 420,375 435,340 450,345 470,365 490,385 500,380 515,345 525,320 535,285 545,262 560,255 575,246 585,265 595,285 610,280 620,270 635,262 650,265 665,290 680,315 695,328 705,350 717,378 730,360 745,330 765,305 775,310 790,320 800,325 815,347 835,335 850,310 870,290 895,282 915,290 930,310 955,322 975,335 990,357 1005,350 1020,330 1030,295 1045,265 1060,265 1075,290 1090,315 1110,330 1125,370 1140,385 1157,392 1175,385 1190,365 1210,350 1235,325 1260,325 1280,345 1300,358 1320,362 1330,368"
            />
            <Line color="#000" thin pts="0,326 1440,326" />
            <Line color={INK.r} pts="15,248 30,265 42,275 58,265 80,267 98,265 110,245 125,212 142,190 160,203 180,208 200,203 215,215 225,228 250,230 262,208 285,218 305,232 325,240 343,260 355,300 370,340 385,375 400,385 415,383 430,365 445,367 465,382 480,398 500,423 515,417 530,395 545,362 555,350 575,318 600,320 620,300 640,272 655,270 675,283 695,298 710,320 722,332 735,323 745,310 775,302 795,307 815,320 835,315 850,300 870,293 885,270 915,258 940,265 965,272 985,292 1005,302 1020,292 1035,262 1050,240 1060,233 1080,237 1105,248 1120,270 1140,300 1160,320 1175,333 1215,335 1240,325 1270,328 1290,345 1315,367 1330,375" />
            <Line color={INK.g} pts="15,253 40,263 100,267 120,255 140,230 165,213 210,210 230,218 250,222 285,215 310,222 340,238 360,275 380,305 400,340 415,353 440,358 460,368 480,383 500,400 520,405 540,395 560,375 585,350 610,335 630,318 650,298 680,285 700,292 720,308 740,312 790,306 830,313 860,308 885,288 920,272 965,270 985,280 1005,288 1025,288 1045,275 1065,257 1090,248 1110,245 1130,258 1155,285 1185,312 1215,322 1250,324 1285,328 1305,340 1330,355" />
          </g>
        </Plot>
        <ValueScale size="h-[100px]" zeroY={52} unit={4.35} from={-10} to={11} major={5} minor={1} labels={[[10, '10'], [5, '5'], [0, '0'], [-5, '-5']]} />
      </Row>
      <PanelHeader>
        Force Index <span className="text-[#008080]">(-5,774.96)</span>
      </PanelHeader>
      <div className="flex bg-white">
        <Plot h={99} size="h-[99px]">
          <g transform="translate(-18 -537) scale(1.1957 1)">
            <Line color="#000" thin pts="0,755 1440,755" />
            <Line color={INK.t} pts="15,750 25,765 35,762 43,745 51,677 60,715 67,748 76,758 85,742 95,740 102,690 108,558 118,640 125,690 133,748 142,622 149,752 180,753 190,735 200,757 222,755 230,715 240,738 250,738 257,667 265,728 272,757 280,765 290,750 300,757 322,740 330,755 342,757 354,810 364,770 372,763 380,778 392,760 400,755 420,745 440,755 495,758 515,742 545,745 555,757 567,747 580,760 600,742 608,752 618,720 625,738 640,745 660,750 700,752 715,762 722,738 742,737 755,752 775,748 785,760 815,748 825,755 865,750 880,735 890,748 905,752 912,733 920,760 950,752 970,755 1020,745 1027,678 1035,728 1045,714 1055,735 1065,750 1115,752 1125,766 1135,753 1145,775 1152,757 1190,750 1215,750 1222,743 1250,748 1285,757 1300,752 1330,752" />
          </g>
        </Plot>
        <ValueScale size="h-[99px]" zeroY={72} unit={0.00364} from={-6000} to={19000} major={5000} minor={1000} labels={[[15000, '15000'], [10000, '10000'], [5000, '5000'], [0, '0'], [-5000, '-5000']]} box={['x100', 87, 24]} />
      </div>
      <DateScale
        size="h-5"
        marks={dailyMonths}
        minor={[4, 21, 48, 63, 80, 113, 127, 142, 159, 176, 193, 209, 226, 256, 272, 289, 325, 341, 358, 374, 394, 410, 427, 443, 470, 486, 503, 533, 549]}
      />
      <ScrollRow period="D" thumb="w-[33%]" />
    </ChartWindow>
  );
}

/* ---------- application shell ---------- */

function SideTool({ name }: { name: string }) {
  const state =
    name === 'Select'
      ? 'rounded-[3px] border border-[#98b5e2] bg-white'
      : name === 'Scroll tool'
        ? 'rounded-xs border border-white bg-[#c1d2fe]'
        : '';
  return (
    <button aria-label={name} title={name} className={`grid h-[22px] w-6 place-items-center ${state}`}>
      {icons[name]}
    </button>
  );
}

function SideRule() {
  return (
    <div className="flex h-1.5 w-5 items-center">
      <span className="h-0.5 w-full border-b border-white bg-[#aca899]" />
    </div>
  );
}

function SideBar() {
  return (
    <aside className="flex w-[31px] shrink-0 flex-col items-center bg-[#ece9d8]">
      <div className="h-[13px] w-6 pt-[3px]"><span className="block h-[3px] border-b border-[#aca899] bg-white" /></div>
      <SideTool name="Select" />
      <SideTool name="Crosshair" />
      <SideRule />
      {['Trendline', 'Horizontal line', 'Vertical line', 'Stop and limit'].map((n) => <SideTool key={n} name={n} />)}
      <div className="h-[21px] w-full pt-1.5">
        <span className="block h-0.5 border-b border-white bg-[#aca899]" />
        <span className="mx-[3px] mt-1 block h-[3px] border-b border-[#aca899] bg-white" />
      </div>
      <SideTool name="Scroll tool" />
      <SideRule />
      <SideTool name="Line study" />
      <SideRule />
      {['Fibonacci arcs', 'Fibonacci fan', 'Projection', 'Retracement', 'Time zones'].map((n) => <SideTool key={n} name={n} />)}
      <SideRule />
      {['Gann line', 'Gann fan', 'Gann grid'].map((n) => <SideTool key={n} name={n} />)}
      <span className="mt-1.5 h-0.5 w-full border-b border-white bg-[#aca899]" />
    </aside>
  );
}

function BandEnd() {
  return <span className="w-0.5 shrink-0 self-stretch border-r border-white bg-[#aca899]" />;
}

function TopTools() {
  return (
    <div role="toolbar" aria-label="Standard" className="flex h-[27px] shrink-0 items-center">
      <Grip />
      <span className="w-1" />
      {['New', 'Open', 'Save'].map((n) => <ToolButton key={n} name={n} />)}
      <VSep />
      {['Print', 'Print Preview'].map((n) => <ToolButton key={n} name={n} />)}
      <VSep />
      {['Cut', 'Copy', 'Paste'].map((n) => <ToolButton key={n} name={n} />)}
      <VSep />
      <ToolButton name="Undo" />
      <VSep />
      {['Data window', 'Zoom'].map((n) => <ToolButton key={n} name={n} />)}
      <VSep />
      <Picker label="Indicator" value="Option Price" width="w-[175px]" glyph />
      <VSep />
      {['The Explorer', 'Expert Advisor'].map((n) => <ToolButton key={n} name={n} />)}
      <ToolButton name="Indicator Builder">
        <span className="font-['Liberation_Serif',serif] text-[14px] leading-4 italic">f<span className="text-[10px]">(x)</span></span>
      </ToolButton>
      <ToolButton name="System Tester" />
      <ToolButton name="Quotes"><span className="text-[14px] leading-4 font-bold text-[#008000]">$</span></ToolButton>
      {['Find', 'Context help'].map((n) => <ToolButton key={n} name={n} />)}
      <span className="w-1.5" />
      <BandEnd />
      <Grip />
      <span className="w-1.5" />
      {['Cascade', 'Tile vertically', 'Tile horizontally', 'Tile in grid', 'Layout options'].map((n) => <ToolButton key={n} name={n} />)}
      <span className="w-1.5" />
      <BandEnd />
    </div>
  );
}

const palette = ['#000000', '#0000ff', '#00ffff', '#00ff00', '#ff00ff', '#ff0000', '#ffff00', '#ffffff', '#000080', '#008080', '#008000', '#800080', '#800000', '#808000', '#808080', '#c0c0c0'];

function BottomTools() {
  return (
    <div role="toolbar" aria-label="Styles" className="flex h-[30px] shrink-0 items-center border-t-2 border-white">
      <Grip />
      <span className="w-1" />
      <Picker label="Line style" value="" width="w-[130px]" line />
      <VSep />
      <Picker label="Line weight" value="" width="w-[100px]" line />
      <span className="w-2" />
      <BandEnd />
      <Grip />
      <div className="ml-1 grid shrink-0 grid-cols-8 gap-px">
        {palette.map((c) => (
          <button key={c} aria-label={c} className={`size-[9px] border ${c === '#ff0000' ? 'border-dotted border-white' : 'border-[#aca899]'}`} style={{ backgroundColor: c }} />
        ))}
      </div>
      <button aria-label="More colors" className="grid h-4 w-4 place-items-center">
        <svg className="h-[3px] w-[5px]" viewBox="0 0 5 3"><path d="M0 0h5L2.500 3z" /></svg>
      </button>
      <span className="w-1.5" />
      <BandEnd />
      <Grip />
      <span className="w-[3px]" />
      {['Page report', 'Page quote', 'Page news'].map((n) => (
        <ToolButton key={n} name={n}>
          <Ico>
            <path d="M2.500 1.5h8l3 3v10h-11z" fill="#fff" stroke="#808080" />
            <path d="M13.500 5v10H3" stroke="#404040" />
            <ellipse cx="8" cy="9.500" rx="1.800" ry="3.200" stroke="#ff0000" strokeWidth="1.8" shapeRendering="auto" />
          </Ico>
        </ToolButton>
      ))}
      {['Chart up', 'Chart down'].map((n) => (
        <ToolButton key={n} name={n}>
          <Ico><path d="M4 4.500H2.500v8h12v-8H12" /><path d="M8.500 1v6M6.500 5.500l2 2 2-2" /><path d="M3 11l3-3M9 11l4-4" stroke="#ff0000" /></Ico>
        </ToolButton>
      ))}
      {['Pane one', 'Pane two', 'Pane three'].map((n) => (
        <ToolButton key={n} name={n}>
          <Ico><path d="M2.500 2.500h11v5h-11z" fill="#ece9d8" stroke="#808080" /><path d="M2.500 7.500h11v6h-11z" fill="#fff" /><path d="M2 3h12" stroke="#404040" strokeWidth="2" /><path d="M2 8h12" stroke="#000080" strokeWidth="2" /></Ico>
        </ToolButton>
      ))}
      <span className="w-2" />
      <BandEnd />
      <Grip />
      <input aria-label="Symbol" defaultValue="GSPBEX" className="ml-1 h-5 w-[62px] shrink-0 border border-t-[#716f64] border-l-[#716f64] border-r-white border-b-white bg-[#ece9d8] px-px outline-none" />
      <span className="w-[3px]" />
      <VSep />
      <Picker label="Account" value="" width="w-20" />
      <VSep />
      <Picker label="Vendor" value="&lt;No Vendor&gt;" width="w-[150px]" />
      <VSep />
      <button disabled className="h-[21px] w-16 shrink-0 rounded-[3px] border border-[#c9c7ba] bg-[#f5f4ea] text-[#a1a192]">Trade</button>
      <span className="w-1.5" />
      <BandEnd />
    </div>
  );
}

export default function App() {
  return (
    <div className={`flex min-h-screen flex-col bg-[#ece9d8] text-[11px] text-black ${UI}`}>
      <header className={`flex h-[26px] shrink-0 items-center gap-1 bg-linear-to-b from-[#3c8cff] via-[#0050e0] via-25% to-[#0462ff] pr-0.5 pl-0.5 text-[13px] font-bold text-white text-shadow-[1px_1px_0_#0a1e80] ${TITLE}`}>
        <AppGlyph />
        <h1 className="flex-1">MetaStock Professional - GSPBEX.mwl - GSPBEX:2</h1>
        <FrameButtons active restore />
      </header>
      <nav className="flex h-[21px] shrink-0 items-center gap-[11px] border-b border-[#aca899] pb-0.5 pl-[5px]">
        {['File', 'Edit', 'View', 'Insert', 'Format', 'Tools', 'Window', 'Help'].map((m) => (
          <button key={m}>{m}</button>
        ))}
      </nav>
      <div className="border-t border-b border-t-white border-b-[#716f64]">
        <TopTools />
      </div>
      <div className="flex flex-1">
        <SideBar />
        <main className="flex min-w-0 flex-1 bg-[#808080] pl-px">
          <WeeklyWindow />
          <DailyWindow />
        </main>
      </div>
      <div className="border-t border-b border-t-[#aca899] border-b-[#716f64]">
        <BottomTools />
      </div>
      <footer className="flex h-4 shrink-0 items-center bg-linear-to-b from-[#d9d6c6] via-[#ece9d8] via-20% to-[#e4e1d0] pl-px leading-4">
        <span className="flex-1">For Help, press F1</span>
        <span className="w-16 border-r border-[#c5c2b2]">06.02.2009</span>
        <span className="w-[57px] border-r border-[#c5c2b2]">&nbsp;</span>
        <span className="w-[72px] border-r border-[#c5c2b2] pl-1">178.869</span>
        <span className="w-11 border-r border-[#c5c2b2] pl-1">11:15</span>
        <span className="w-5 text-center text-[13px] font-bold text-[#008000]">$</span>
        <span className="w-[33px] pl-1.5">NUM</span>
      </footer>
    </div>
  );
}
